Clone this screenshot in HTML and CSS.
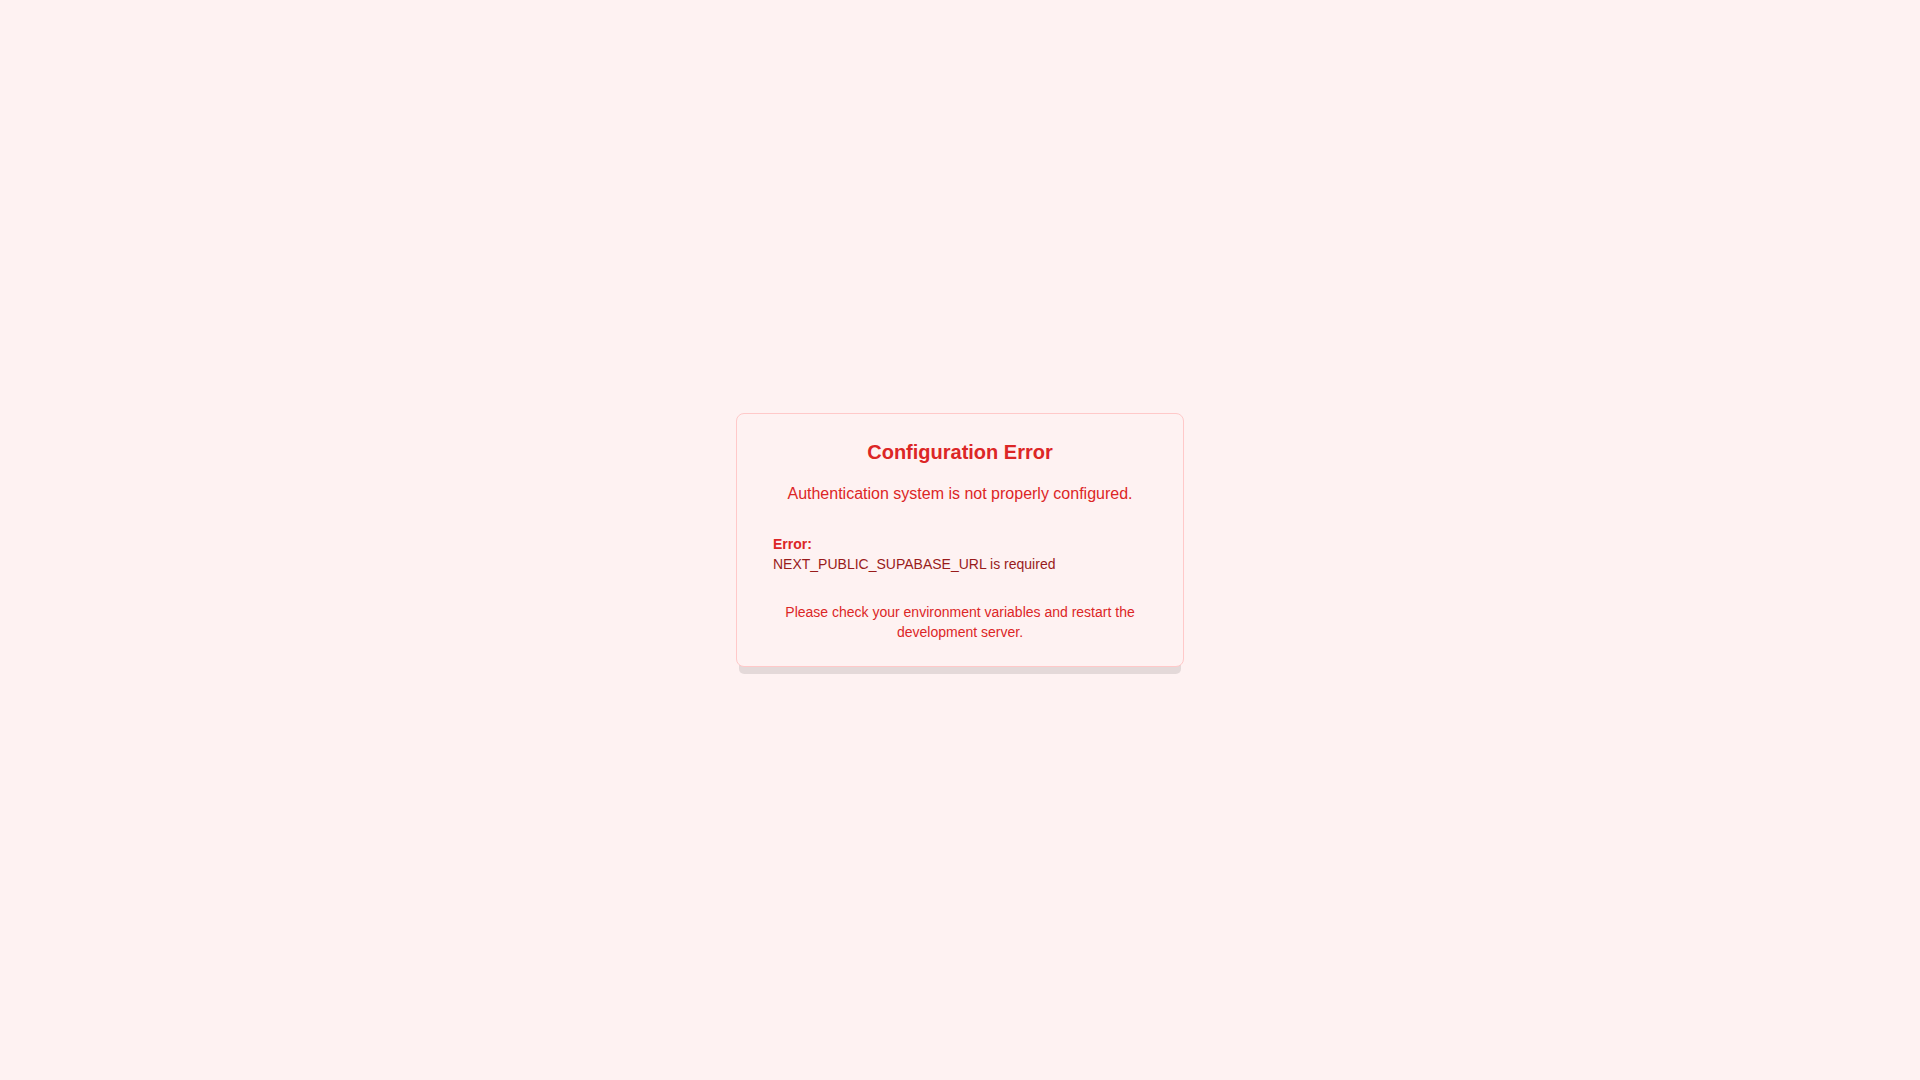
FILE: index.html
```html
<!DOCTYPE html>
<html lang="en">
<head>
    <meta charset="UTF-8">
    <meta name="viewport" content="width=device-width, initial-scale=1.0">
    <title>Configuration Error</title>
    <link rel="stylesheet" href="styles.css">
</head>
<body>
    <main class="card">
        <h1 class="title">Configuration Error</h1>
        <p class="lead">Authentication system is not properly configured.</p>
        <div class="details">
            <p class="label">Error:</p>
            <p class="message">NEXT_PUBLIC_SUPABASE_URL is required</p>
        </div>
        <p class="hint">Please check your environment variables and restart the development server.</p>
    </main>
</body>
</html>
```

FILE: styles.css
```css
* { box-sizing: border-box; }
body { display: flex; align-items: center; justify-content: center; min-height: 100vh; margin: 0; background: #fef2f2; color: #dc2626; font-family: "Liberation Sans", Arial, sans-serif; }
h1, p { margin: 0; }
.card { width: 100%; max-width: 448px; padding: 24px; border: 1px solid #ffc9c9; border-radius: 8px; background: #fef2f2; text-align: center; box-shadow: 0 10px 0 -3px rgba(0, 0, 0, 0.1); }
.title { margin-bottom: 16px; font-size: 20px; line-height: 28px; }
.lead { margin-bottom: 16px; font-size: 16px; line-height: 24px; }
.details { margin-bottom: 16px; padding: 12px; text-align: left; font-size: 14px; line-height: 20px; }
.label { font-weight: bold; }
.message { color: #991b1b; }
.hint { font-size: 14px; line-height: 20px; }
```
